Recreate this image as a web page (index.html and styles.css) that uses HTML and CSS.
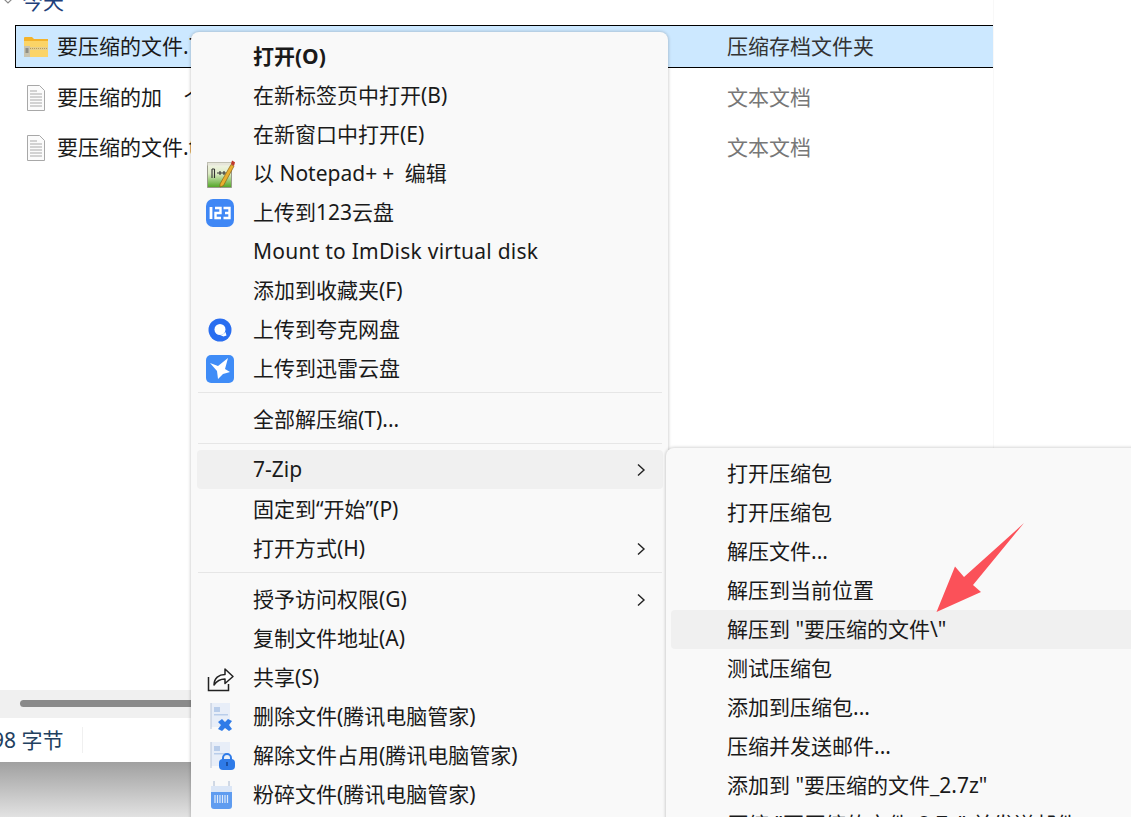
FILE: index.html
```html
<!DOCTYPE html>
<html lang="zh">
<head>
<meta charset="utf-8">
<title>7-Zip 右键菜单</title>
<link rel="stylesheet" href="styles.css">
</head>
<body>
<div class="window">
  <div class="list">
    <div class="group"><svg class="caret" viewBox="0 0 12 12"><path d="M2 4l4 4 4-4" fill="none" stroke="#8a8a8a" stroke-width="1.2"/></svg><span>今天</span></div>
    <div class="row selected">
      <svg class="file-icon" viewBox="0 0 26 26"><path d="M1 4a1 1 0 0 1 1-1h7l2 2h14v4H1z" fill="#f3b32c"/><path d="M1 7h24v16H1z" fill="#fbd467"/><path d="M1 13h24v3H1z" fill="#e6cf8c"/><path d="M1 14.500h24" stroke="#b8995a" stroke-dasharray="1 1"/><path d="M1 12h6v11H1z" fill="#c9c4b0"/><path d="M2.500 14h3v5h-3z" fill="#8f8f86"/></svg>
      <span class="name">要压缩的文件.7z</span><span class="type dark">压缩存档文件夹</span>
    </div>
    <div class="row">
      <svg class="file-icon" viewBox="0 0 26 26"><path d="M4.500 .5h12l5 5v20h-17z" fill="#fbfbfb" stroke="#a8a8a8"/><path d="M7 6h7M7 9h12M7 12h12M7 15h12M7 18h12M7 21h12" stroke="#a9a9a9"/></svg>
      <span class="name">要压缩的加&nbsp;&nbsp;&nbsp;&nbsp;个</span><span class="type">文本文档</span>
    </div>
    <div class="row">
      <svg class="file-icon" viewBox="0 0 26 26"><path d="M4.500 .5h12l5 5v20h-17z" fill="#fbfbfb" stroke="#a8a8a8"/><path d="M7 6h7M7 9h12M7 12h12M7 15h12M7 18h12M7 21h12" stroke="#a9a9a9"/></svg>
      <span class="name">要压缩的文件.txt</span><span class="type">文本文档</span>
    </div>
  </div>
  <div class="hscroll"><div class="thumb"></div></div>
  <div class="status"><span class="count">98 字节</span><span class="status-divider"></span></div>
  <div class="desktop"></div>
</div>

<div class="menu main-menu">
  <div class="item bold"><span class="slot"></span>打开(O)</div>
  <div class="item"><span class="slot"></span>在新标签页中打开(B)</div>
  <div class="item"><span class="slot"></span>在新窗口中打开(E)</div>
  <div class="item"><span class="slot"><svg class="icon" viewBox="0 0 30 30"><defs><linearGradient id="npp" x1="0" y1="0" x2="0" y2="1"><stop offset="0" stop-color="#f6f6ec"/><stop offset=".45" stop-color="#dcebc4"/><stop offset="1" stop-color="#4fa524"/></linearGradient></defs><path d="M2.500 3.500h24v25h-24z" fill="url(#npp)" stroke="#9a9a8c"/><path d="M2.500 3.500h24v3h-24z" fill="#e6e6da"/><path d="M7 10v9M9.500 10v9M7 10h2.500M12 14h6M15 12v4M17 14h4M19 12v4" fill="none" stroke="#333" stroke-width="1.100"/><path d="M15 25L26 5.500l3 1.700L18.500 26.500l-3.500 1.500z" fill="#e9b02f" stroke="#8a6414" stroke-width=".7"/><path d="M26 5l1-3.500 3 1.800-1 3.700z" fill="#c0392b"/></svg></span>以 Notepad<span class="plus">++</span> 编辑</div>
  <div class="item"><span class="slot"><svg class="icon" viewBox="0 0 30 30"><rect x="1" y="1" width="28" height="28" rx="7" fill="#3f87f5"/><path d="M6 9v12" stroke="#fff" stroke-width="2.800" fill="none"/><path d="M10 10h5.500v5H10.500v5H16" stroke="#fff" stroke-width="2.400" fill="none"/><path d="M18.500 10h6v10h-6M20 15h4.500" stroke="#fff" stroke-width="2.400" fill="none"/></svg></span>上传到123云盘</div>
  <div class="item"><span class="slot"></span><span class="wide">Mount to ImDisk virtual disk</span></div>
  <div class="item"><span class="slot"></span>添加到收藏夹(F)</div>
  <div class="item"><span class="slot"><svg class="icon" viewBox="0 0 30 30"><circle cx="15" cy="15" r="11.500" fill="#2a6ef0"/><circle cx="15" cy="14.500" r="5.500" fill="#fff"/><path d="M15 20c3 0 4.500-1.500 5.500-3l1 3.500-3 1z" fill="#fff"/></svg></span>上传到夸克网盘</div>
  <div class="item"><span class="slot"><svg class="icon" viewBox="0 0 30 30"><rect x="1" y="1" width="28" height="28" rx="5" fill="#3f8cf7"/><path d="M5 9l8 3 10-8-3 11 5 3-7 2-5 5-1-8z" fill="#fff"/></svg></span>上传到迅雷云盘</div>
  <div class="sep"></div>
  <div class="item"><span class="slot"></span>全部解压缩(T)...</div>
  <div class="sep"></div>
  <div class="item hover"><span class="slot"></span>7-Zip<svg class="chev" viewBox="0 0 10 14"><path d="M2 1.500L8 7l-6 5.500" fill="none" stroke="#222" stroke-width="1.400"/></svg></div>
  <div class="item"><span class="slot"></span>固定到“开始”(P)</div>
  <div class="item"><span class="slot"></span>打开方式(H)<svg class="chev" viewBox="0 0 10 14"><path d="M2 1.500L8 7l-6 5.500" fill="none" stroke="#222" stroke-width="1.400"/></svg></div>
  <div class="sep"></div>
  <div class="item"><span class="slot"></span>授予访问权限(G)<svg class="chev" viewBox="0 0 10 14"><path d="M2 1.500L8 7l-6 5.500" fill="none" stroke="#222" stroke-width="1.400"/></svg></div>
  <div class="item"><span class="slot"></span>复制文件地址(A)</div>
  <div class="item"><span class="slot"><svg class="icon" viewBox="0 0 30 30"><path d="M3.500 14v13.500h20V21" fill="none" stroke="#222" stroke-width="1.500"/><path d="M9 22c0-7 5-10.500 11-10.500V6l8 7.500-8 7V16c-5 0-8 1.500-11 6z" fill="#fff" stroke="#222" stroke-width="1.500" stroke-linejoin="round"/></svg></span>共享(S)</div>
  <div class="item"><span class="slot"><svg class="icon" viewBox="0 0 30 30"><path d="M6 1h19v24H6z" fill="#e8eef8"/><path d="M6 1v26" stroke="#b8c4d8"/><path d="M9 5h6v5H9zM9 12h14v1.500H9z" fill="#b9cdea"/><path d="M17 17l3 3 3-3 4 2-3 4 3 4-3 2-4-3-3 3-4-2 3-4-3-3z" fill="#2f7be8"/></svg></span>删除文件(腾讯电脑管家)</div>
  <div class="item"><span class="slot"><svg class="icon" viewBox="0 0 30 30"><path d="M6 1h19v24H6z" fill="#e8eef8"/><path d="M6 1v26" stroke="#b8c4d8"/><path d="M9 5h6v5H9zM9 12h14v1.500H9z" fill="#b9cdea"/><path d="M18 19v-2a4 4 0 0 1 8 0v2" fill="none" stroke="#2f7be8" stroke-width="2"/><rect x="14" y="18" width="16" height="11" rx="4" fill="#2f7be8"/><path d="M22 21v4" stroke="#123a80" stroke-width="1.300"/></svg></span>解除文件占用(腾讯电脑管家)</div>
  <div class="item"><span class="slot"><svg class="icon" viewBox="0 0 30 30"><path d="M9 1v5M24 1v5" stroke="#a8b8d0"/><path d="M6 6h21v7H6z" fill="#dbe6f6"/><path d="M6 12h21v14a3 3 0 0 1-3 3H9a3 3 0 0 1-3-3z" fill="#5f9cf0"/><path d="M10 15v8M12.500 15v8M15 15v8M17.500 15v8M20 15v8M22.500 15v8" stroke="#dce9fb" stroke-width="1.200"/></svg></span>粉碎文件(腾讯电脑管家)</div>
</div>

<div class="menu sub-menu">
  <div class="item sub-item">打开压缩包</div>
  <div class="item sub-item">打开压缩包</div>
  <div class="item sub-item">解压文件...</div>
  <div class="item sub-item">解压到当前位置</div>
  <div class="item sub-item hover">解压到 "要压缩的文件\"</div>
  <div class="item sub-item">测试压缩包</div>
  <div class="item sub-item">添加到压缩包...</div>
  <div class="item sub-item">压缩并发送邮件...</div>
  <div class="item sub-item">添加到 "要压缩的文件_2.7z"</div>
  <div class="item sub-item">压缩 "要压缩的文件_2.7z" 并发送邮件</div>
</div>

<svg class="arrow" viewBox="930 515 100 105"><path d="M936.500 612L955 566.500l9 10.500 60-54-51 62 8 7z" fill="#fb5159"/></svg>
</body>
</html>
```
FILE: styles.css
```css
* { box-sizing: border-box; }
html, body { margin: 0; height: 100%; }
body {
  position: relative;
  overflow: hidden;
  background: #fff;
  color: #1a1a1a;
  font: 21px/39px "Noto Sans", "Noto Sans CJK SC", sans-serif;
}
.window { display: flex; flex-direction: column; height: 100vh; }
.list { height: 690px; flex: none; width: 994px; border-right: 1px solid #f8f8f8; }
.group {
  display: flex;
  align-items: center;
  gap: 8px;
  height: 26px;
  margin-top: -12px;
  margin-bottom: 11px;
  padding-left: 2px;
  color: #1f3f7a;
}
.caret { width: 12px; height: 12px; }
.row {
  display: flex;
  align-items: center;
  height: 43px;
  margin: 0 0 7px 15px;
  padding-left: 8px;
  color: #1a1a1a;
}
.selected {
  background: #cce8ff;
  border: 1px solid #000;
  border-right: 0;
  padding-left: 7px;
}
.file-icon { width: 26px; height: 26px; flex: none; margin-right: 8px; }
.selected + .row { margin-top: 8px; }
.name { width: 670px; white-space: nowrap; }
.type { color: #777; }
.type.dark { color: #333; }
.hscroll {
  height: 28px;
  flex: none;
  padding: 10px 0 0 20px;
  background: #f0f0f0;
}
.thumb { width: 180px; height: 7px; border-radius: 4px; background: #8a8a8a; }
.status {
  height: 44px;
  flex: none;
  display: flex;
  align-items: center;
  background: #fff;
  color: #22405f;
}
.count { margin-left: -8px; white-space: nowrap; }
.status-divider { width: 1px; height: 26px; margin-left: 19px; background: #f0f0f0; }
.desktop { flex: 1; background: linear-gradient(#a0a0a0, #e2e2e2); }
.menu {
  position: absolute;
  background: #f9f9f9;
  border-radius: 8px 8px 0 0;
  box-shadow: 0 0 3px 1px rgba(0, 0, 0, .16);
}
.main-menu { left: 191px; top: 32px; width: 477px; height: 800px; padding: 5px 5px 0 6px; }
.sub-menu { left: 666px; top: 448px; width: 480px; height: 400px; padding: 6px 0 0 5px; }
.item {
  display: flex;
  align-items: center;
  height: 39px;
  border-radius: 4px;
  white-space: pre;
}
.bold { font-weight: 700; }
.hover { background: #f0f0f0; }
.main-menu .hover { margin-top: -1px; margin-bottom: 1px; }
.slot { width: 56px; flex: none; display: flex; padding-left: 8px; }
.icon { width: 30px; height: 30px; display: block; }
.sub-item { padding-left: 56px; }
.wide { letter-spacing: .25px; }
.plus { letter-spacing: 5px; }
.chev { width: 10px; height: 14px; margin-left: auto; margin-right: 17px; flex: none; }
.sep { height: 12px; padding-top: 4px; margin: 0 1px; }
.sep::before { content: ""; display: block; height: 1px; background: #e6e6e6; }
.arrow { position: absolute; left: 930px; top: 515px; width: 100px; height: 105px; }
```
